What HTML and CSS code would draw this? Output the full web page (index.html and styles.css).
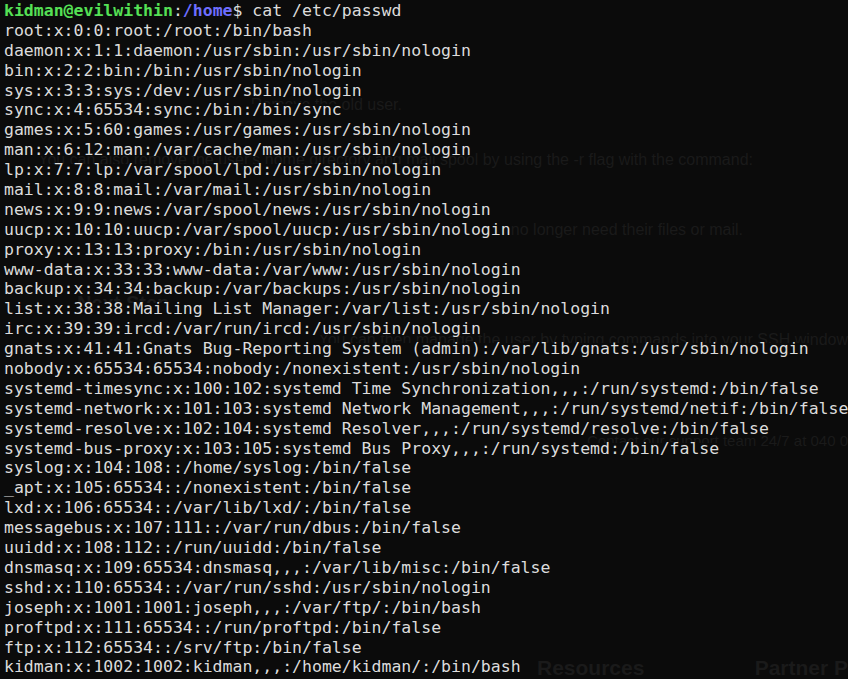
FILE: index.html
```html
<!DOCTYPE html>
<html>
<head>
<meta charset="utf-8">
<link rel="stylesheet" href="styles.css">
</head>
<body>
<div class="screen">
  <div class="ghost">
    <span class="g g1">Remove the old user.</span>
    <span class="g g2">You can also remove the user's home directory and mail spool by using the -r flag with the command:</span>
    <span class="g g3">Only do this when you no longer need their files or mail.</span>
    <span class="g g4 bold">Next Step</span>
    <span class="g g5">You can then manage the user by typing commands into your SSH window</span>
    <span class="g g6">Contact our support team 24/7 at 040 0</span>
    <span class="g g7 bold">Resources</span>
    <span class="g g8 bold">Partner P</span>
  </div>
  <div class="term">
    <div class="line"><span class="cell"><b class="user">kidman@evilwithin</b>:<b class="path">/home</b>$ cat /etc/passwd</span></div>
    <div class="line"><span class="cell">root:x:0:0:root:/root:/bin/bash</span></div>
    <div class="line"><span class="cell">daemon:x:1:1:daemon:/usr/sbin:/usr/sbin/nologin</span></div>
    <div class="line"><span class="cell">bin:x:2:2:bin:/bin:/usr/sbin/nologin</span></div>
    <div class="line"><span class="cell">sys:x:3:3:sys:/dev:/usr/sbin/nologin</span></div>
    <div class="line"><span class="cell">sync:x:4:65534:sync:/bin:/bin/sync</span></div>
    <div class="line"><span class="cell">games:x:5:60:games:/usr/games:/usr/sbin/nologin</span></div>
    <div class="line"><span class="cell">man:x:6:12:man:/var/cache/man:/usr/sbin/nologin</span></div>
    <div class="line"><span class="cell">lp:x:7:7:lp:/var/spool/lpd:/usr/sbin/nologin</span></div>
    <div class="line"><span class="cell">mail:x:8:8:mail:/var/mail:/usr/sbin/nologin</span></div>
    <div class="line"><span class="cell">news:x:9:9:news:/var/spool/news:/usr/sbin/nologin</span></div>
    <div class="line"><span class="cell">uucp:x:10:10:uucp:/var/spool/uucp:/usr/sbin/nologin</span></div>
    <div class="line"><span class="cell">proxy:x:13:13:proxy:/bin:/usr/sbin/nologin</span></div>
    <div class="line"><span class="cell">www-data:x:33:33:www-data:/var/www:/usr/sbin/nologin</span></div>
    <div class="line"><span class="cell">backup:x:34:34:backup:/var/backups:/usr/sbin/nologin</span></div>
    <div class="line"><span class="cell">list:x:38:38:Mailing List Manager:/var/list:/usr/sbin/nologin</span></div>
    <div class="line"><span class="cell">irc:x:39:39:ircd:/var/run/ircd:/usr/sbin/nologin</span></div>
    <div class="line"><span class="cell">gnats:x:41:41:Gnats Bug-Reporting System (admin):/var/lib/gnats:/usr/sbin/nologin</span></div>
    <div class="line"><span class="cell">nobody:x:65534:65534:nobody:/nonexistent:/usr/sbin/nologin</span></div>
    <div class="line"><span class="cell">systemd-timesync:x:100:102:systemd Time Synchronization,,,:/run/systemd:/bin/false</span></div>
    <div class="line"><span class="cell">systemd-network:x:101:103:systemd Network Management,,,:/run/systemd/netif:/bin/false</span></div>
    <div class="line"><span class="cell">systemd-resolve:x:102:104:systemd Resolver,,,:/run/systemd/resolve:/bin/false</span></div>
    <div class="line"><span class="cell">systemd-bus-proxy:x:103:105:systemd Bus Proxy,,,:/run/systemd:/bin/false</span></div>
    <div class="line"><span class="cell">syslog:x:104:108::/home/syslog:/bin/false</span></div>
    <div class="line"><span class="cell">_apt:x:105:65534::/nonexistent:/bin/false</span></div>
    <div class="line"><span class="cell">lxd:x:106:65534::/var/lib/lxd/:/bin/false</span></div>
    <div class="line"><span class="cell">messagebus:x:107:111::/var/run/dbus:/bin/false</span></div>
    <div class="line"><span class="cell">uuidd:x:108:112::/run/uuidd:/bin/false</span></div>
    <div class="line"><span class="cell">dnsmasq:x:109:65534:dnsmasq,,,:/var/lib/misc:/bin/false</span></div>
    <div class="line"><span class="cell">sshd:x:110:65534::/var/run/sshd:/usr/sbin/nologin</span></div>
    <div class="line"><span class="cell">joseph:x:1001:1001:joseph,,,:/var/ftp/:/bin/bash</span></div>
    <div class="line"><span class="cell">proftpd:x:111:65534::/run/proftpd:/bin/false</span></div>
    <div class="line"><span class="cell">ftp:x:112:65534::/srv/ftp:/bin/false</span></div>
    <div class="line"><span class="cell">kidman:x:1002:1002:kidman,,,:/home/kidman/:/bin/bash</span></div>
  </div>
</div>
</body>
</html>
```
FILE: styles.css
```css
html, body {
  margin: 0;
  padding: 0;
  background: #0b0b0b;
}
.screen {
  position: relative;
  width: 848px;
  height: 679px;
  overflow: hidden;
  background: #0b0b0b;
}
.ghost {
  position: absolute;
  inset: 0;
  font-family: "Liberation Sans", Arial, sans-serif;
  font-size: 16px;
  color: #1a1a1a;
  white-space: nowrap;
}
.g { position: absolute; }
.bold { font-weight: bold; }
.g1 { right: 446px; top: 96px; }
.g2 { right: 95px; top: 151px; }
.g3 { right: 105px; top: 221px; }
.g4 { left: 77px; top: 292px; font-size: 20px; }
.g5 { right: 0; top: 331px; }
.g6 { right: 0; top: 432px; font-size: 15px; }
.g7 { left: 537px; top: 656px; font-size: 21px; }
.g8 { right: 0; top: 656px; font-size: 21px; }
.term {
  position: relative;
  padding: 1px 0 0 4px;
  font-family: "DejaVu Sans Mono", "Liberation Mono", monospace;
  font-size: 16.5px;
  line-height: 19.9px;
  color: #dcdcdc;
}
.line {
  height: 19.9px;
}
.cell {
  display: inline-block;
  height: 19.9px;
  white-space: pre;
  background: linear-gradient(to bottom, transparent 4px, #0b0b0b 4px, #0b0b0b 16px, transparent 16px);
}
.user { color: #55e055; font-weight: bold; }
.path { color: #6e6eff; font-weight: bold; }
```
